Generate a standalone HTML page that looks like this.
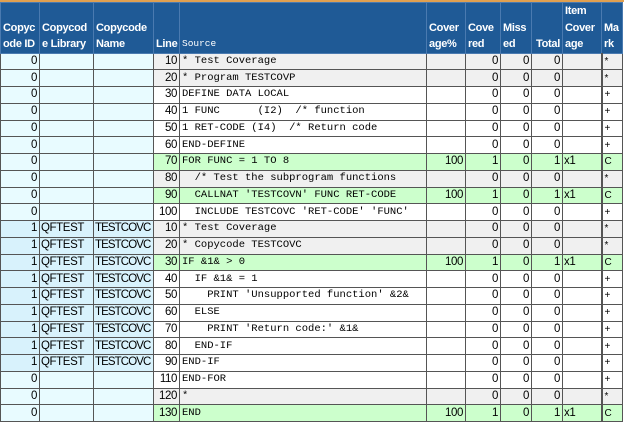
<!DOCTYPE html>
<html><head><style>
body{margin:0;width:624px;height:424px;overflow:hidden;background:#fff;font-family:"Liberation Sans",sans-serif;}
.top{position:absolute;left:0;top:0;width:624px;height:2px;background:#e0a050;}
table{position:absolute;left:0;top:2px;border-collapse:collapse;table-layout:fixed;width:622px;}
th{background:#1f5a96;color:#fff;font-weight:bold;font-size:11px;letter-spacing:-0.3px;line-height:16.5px;text-align:left;vertical-align:bottom;padding:0 2px 0 2px;border:1px solid #4a7ab0;height:46px;overflow:hidden;white-space:nowrap;}
th.src{font-family:"Liberation Mono",monospace;font-weight:normal;font-size:9.5px;letter-spacing:0;}
th.r{text-align:right}
td{height:15.75px;padding:0 2px;border:1px solid #555;font-size:11.5px;letter-spacing:-0.4px;line-height:15px;white-space:pre;overflow:hidden;text-align:right;}
td.l{text-align:left;padding-left:1px}
td.n{letter-spacing:-0.9px;}
td.s{text-align:left;font-family:"Liberation Mono",monospace;font-size:10.5px;letter-spacing:0;}
td.m{border-left:2px solid #555;text-align:left;font-size:10px;}
tr.c0 td.a{background:#e8fbff}
tr.c1 td.a{background:#d8f2fc}
tr.g td.b{background:#f0f0f0}
tr.w td.b{background:#fff}
tr.v td.b{background:#ccffcc}
</style></head><body>
<div class="top"></div>
<table>
<colgroup><col style="width:39px"><col style="width:54px"><col style="width:60px"><col style="width:26px"><col style="width:247px"><col style="width:39px"><col style="width:35px"><col style="width:31px"><col style="width:31px"><col style="width:39px"><col style="width:21px"></colgroup>
<tr><th>Copyc<br>ode ID</th><th>Copycod<br>e Library</th><th>Copycode<br>Name</th><th class="r">Line</th><th class="src">Source</th><th>Cover<br>age%</th><th>Cove<br>red</th><th>Miss<br>ed</th><th class="r">Total</th><th>Item<br>Cover<br>age</th><th>Ma<br>rk</th></tr>
<tr class="c0 g"><td class="a">0</td><td class="a l"></td><td class="a l"></td><td class="b">10</td><td class="b s">* Test Coverage</td><td class="b"></td><td class="b">0</td><td class="b">0</td><td class="b">0</td><td class="b l"></td><td class="b m">*</td></tr>
<tr class="c0 g"><td class="a">0</td><td class="a l"></td><td class="a l"></td><td class="b">20</td><td class="b s">* Program TESTCOVP</td><td class="b"></td><td class="b">0</td><td class="b">0</td><td class="b">0</td><td class="b l"></td><td class="b m">*</td></tr>
<tr class="c0 w"><td class="a">0</td><td class="a l"></td><td class="a l"></td><td class="b">30</td><td class="b s">DEFINE DATA LOCAL</td><td class="b"></td><td class="b">0</td><td class="b">0</td><td class="b">0</td><td class="b l"></td><td class="b m">+</td></tr>
<tr class="c0 w"><td class="a">0</td><td class="a l"></td><td class="a l"></td><td class="b">40</td><td class="b s">1 FUNC      (I2)  /* function</td><td class="b"></td><td class="b">0</td><td class="b">0</td><td class="b">0</td><td class="b l"></td><td class="b m">+</td></tr>
<tr class="c0 w"><td class="a">0</td><td class="a l"></td><td class="a l"></td><td class="b">50</td><td class="b s">1 RET-CODE (I4)  /* Return code</td><td class="b"></td><td class="b">0</td><td class="b">0</td><td class="b">0</td><td class="b l"></td><td class="b m">+</td></tr>
<tr class="c0 w"><td class="a">0</td><td class="a l"></td><td class="a l"></td><td class="b">60</td><td class="b s">END-DEFINE</td><td class="b"></td><td class="b">0</td><td class="b">0</td><td class="b">0</td><td class="b l"></td><td class="b m">+</td></tr>
<tr class="c0 v"><td class="a">0</td><td class="a l"></td><td class="a l"></td><td class="b">70</td><td class="b s">FOR FUNC = 1 TO 8</td><td class="b">100</td><td class="b">1</td><td class="b">0</td><td class="b">1</td><td class="b l">x1</td><td class="b m">C</td></tr>
<tr class="c0 g"><td class="a">0</td><td class="a l"></td><td class="a l"></td><td class="b">80</td><td class="b s">  /* Test the subprogram functions</td><td class="b"></td><td class="b">0</td><td class="b">0</td><td class="b">0</td><td class="b l"></td><td class="b m">*</td></tr>
<tr class="c0 v"><td class="a">0</td><td class="a l"></td><td class="a l"></td><td class="b">90</td><td class="b s">  CALLNAT 'TESTCOVN' FUNC RET-CODE</td><td class="b">100</td><td class="b">1</td><td class="b">0</td><td class="b">1</td><td class="b l">x1</td><td class="b m">C</td></tr>
<tr class="c0 w"><td class="a">0</td><td class="a l"></td><td class="a l"></td><td class="b">100</td><td class="b s">  INCLUDE TESTCOVC 'RET-CODE' 'FUNC'</td><td class="b"></td><td class="b">0</td><td class="b">0</td><td class="b">0</td><td class="b l"></td><td class="b m">+</td></tr>
<tr class="c1 g"><td class="a">1</td><td class="a l">QFTEST</td><td class="a l n">TESTCOVC</td><td class="b">10</td><td class="b s">* Test Coverage</td><td class="b"></td><td class="b">0</td><td class="b">0</td><td class="b">0</td><td class="b l"></td><td class="b m">*</td></tr>
<tr class="c1 g"><td class="a">1</td><td class="a l">QFTEST</td><td class="a l n">TESTCOVC</td><td class="b">20</td><td class="b s">* Copycode TESTCOVC</td><td class="b"></td><td class="b">0</td><td class="b">0</td><td class="b">0</td><td class="b l"></td><td class="b m">*</td></tr>
<tr class="c1 v"><td class="a">1</td><td class="a l">QFTEST</td><td class="a l n">TESTCOVC</td><td class="b">30</td><td class="b s">IF &amp;1&amp; &gt; 0</td><td class="b">100</td><td class="b">1</td><td class="b">0</td><td class="b">1</td><td class="b l">x1</td><td class="b m">C</td></tr>
<tr class="c1 w"><td class="a">1</td><td class="a l">QFTEST</td><td class="a l n">TESTCOVC</td><td class="b">40</td><td class="b s">  IF &amp;1&amp; = 1</td><td class="b"></td><td class="b">0</td><td class="b">0</td><td class="b">0</td><td class="b l"></td><td class="b m">+</td></tr>
<tr class="c1 w"><td class="a">1</td><td class="a l">QFTEST</td><td class="a l n">TESTCOVC</td><td class="b">50</td><td class="b s">    PRINT 'Unsupported function' &amp;2&amp;</td><td class="b"></td><td class="b">0</td><td class="b">0</td><td class="b">0</td><td class="b l"></td><td class="b m">+</td></tr>
<tr class="c1 w"><td class="a">1</td><td class="a l">QFTEST</td><td class="a l n">TESTCOVC</td><td class="b">60</td><td class="b s">  ELSE</td><td class="b"></td><td class="b">0</td><td class="b">0</td><td class="b">0</td><td class="b l"></td><td class="b m">+</td></tr>
<tr class="c1 w"><td class="a">1</td><td class="a l">QFTEST</td><td class="a l n">TESTCOVC</td><td class="b">70</td><td class="b s">    PRINT 'Return code:' &amp;1&amp;</td><td class="b"></td><td class="b">0</td><td class="b">0</td><td class="b">0</td><td class="b l"></td><td class="b m">+</td></tr>
<tr class="c1 w"><td class="a">1</td><td class="a l">QFTEST</td><td class="a l n">TESTCOVC</td><td class="b">80</td><td class="b s">  END-IF</td><td class="b"></td><td class="b">0</td><td class="b">0</td><td class="b">0</td><td class="b l"></td><td class="b m">+</td></tr>
<tr class="c1 w"><td class="a">1</td><td class="a l">QFTEST</td><td class="a l n">TESTCOVC</td><td class="b">90</td><td class="b s">END-IF</td><td class="b"></td><td class="b">0</td><td class="b">0</td><td class="b">0</td><td class="b l"></td><td class="b m">+</td></tr>
<tr class="c0 w"><td class="a">0</td><td class="a l"></td><td class="a l"></td><td class="b">110</td><td class="b s">END-FOR</td><td class="b"></td><td class="b">0</td><td class="b">0</td><td class="b">0</td><td class="b l"></td><td class="b m">+</td></tr>
<tr class="c0 g"><td class="a">0</td><td class="a l"></td><td class="a l"></td><td class="b">120</td><td class="b s">*</td><td class="b"></td><td class="b">0</td><td class="b">0</td><td class="b">0</td><td class="b l"></td><td class="b m">*</td></tr>
<tr class="c0 v"><td class="a">0</td><td class="a l"></td><td class="a l"></td><td class="b">130</td><td class="b s">END</td><td class="b">100</td><td class="b">1</td><td class="b">0</td><td class="b">1</td><td class="b l">x1</td><td class="b m">C</td></tr>
</table>
</body></html>
